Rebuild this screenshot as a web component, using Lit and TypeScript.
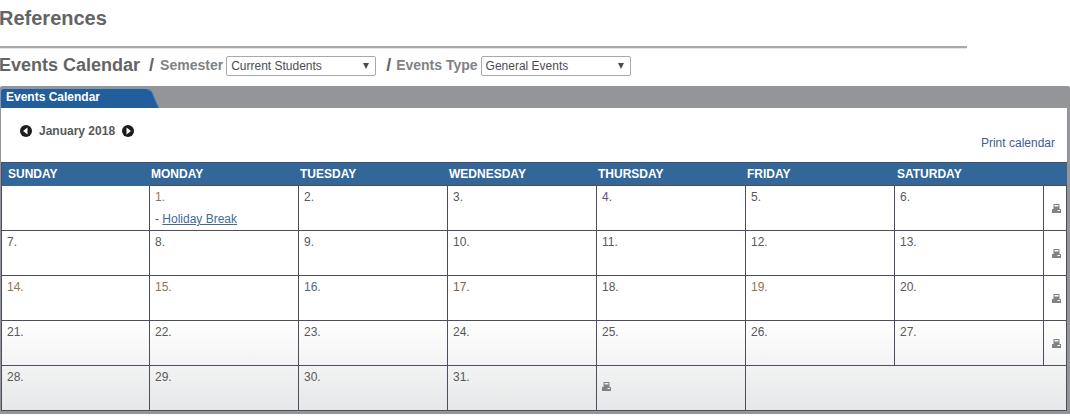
import { LitElement, html, css, svg } from "lit";
import { customElement } from "lit/decorators.js";

const printer = svg`<svg class="printer" width="9" height="9" viewBox="0 0 9 9"><path fill="#808285" fill-rule="evenodd" d="M1.500 0h6v5h-6z M2.500 1v1.500h4V1z"/><path fill="#808285" d="M0 5h9v4H0z"/><path fill="#fff" d="M5.500 6h2.500v1H5.500z"/></svg>`;

const colors: Record<number, string> = { 1: "#8f7650", 4: "#6a4f80", 14: "#8f7650", 15: "#8f7650", 16: "#4a6a8e", 17: "#7d5f4a", 19: "#8f7650" };

@customElement("app-root")
export class AppRoot extends LitElement {
  static styles = css`
    :host { display: block; font-family: "Liberation Sans", Arial, sans-serif; width: 1070px; height: 420px; overflow: hidden; background: #fff; }
    .title { font-size: 20px; font-weight: bold; color: #636466; line-height: 21px; padding-top: 8px; height: 46px; box-sizing: border-box; margin: 0 0 0 -1px; }
    .rule { width: 967px; height: 2px; background: #a7a8aa; border-bottom: 1px solid #e6e6e6; margin-bottom: 4px; }
    .filters { display: flex; align-items: center; height: 24px; color: #808285; font-weight: bold; font-size: 14px; margin-bottom: 9px; }
    .filters h2 { margin: 0 0 0 -1px; font-size: 18px; color: #636466; font-weight: bold; }
    .slash { font-size: 18px; color: #636466; margin: 0 5px 0 10px; }
    .slash.near { margin: 0 6px 0 9px; }
    .sel { position: relative; display: inline-block; margin: 2px 0 0 3px; height: 20px; }
    select { appearance: none; width: 150px; height: 20px; box-sizing: border-box; border: 1px solid #a9a9a9; border-radius: 2px; background: #fff; font: 12px "Liberation Sans", Arial, sans-serif; color: #4d4d4f; padding: 0 0 0 4px; display: block; }
    .arrow { position: absolute; right: 7px; top: 7px; width: 0; height: 0; border-left: 3px solid transparent; border-right: 3px solid transparent; border-top: 6px solid #4d4d4f; pointer-events: none; }
    .panel { background: #949598; padding: 22px 3px 3px 1px; position: relative; border-radius: 2px 2px 0 0; }
    .tab { position: absolute; left: 1px; top: 3px; width: 158px; height: 19px; }
    .tab svg { position: absolute; left: 0; top: 0; }
    .tab span { position: relative; font-size: 12px; font-weight: bold; color: #fff; padding: 1px 0 0 5px; line-height: 14px; display: block; }
    .body { background: linear-gradient(#fff 0, #fff 70%, #e6e7e8 100%); }
    .top { height: 54px; display: flex; justify-content: space-between; box-sizing: border-box; padding: 16px 12px 0 19px; }
    .month { display: flex; align-items: center; height: 14px; font-size: 12px; font-weight: bold; color: #58595b; gap: 7px; }
    .print-link { font-size: 12px; color: #3f5d94; margin-top: 12px; line-height: 14px; }
    .grid { display: grid; grid-template-columns: 148px repeat(6, 149px) 23px; grid-template-rows: 23px repeat(5, 45px); border-top: 1px solid #4d4d5f; border-left: 1px solid #4d4d5f; }
    .hd { background: #336699; color: #fff; font-size: 12px; font-weight: bold; line-height: 22px; padding-left: 1px; box-sizing: border-box; border-bottom: 1px solid #4d4d5f; }
    .hd.first { padding-left: 6px; border-bottom-color: #336699; }
    .hd.last { padding-left: 2px; }
    .cell { border-right: 1px solid #4d4d5f; border-bottom: 1px solid #4d4d5f; padding: 4px 0 0 5px; box-sizing: border-box; font-size: 12px; color: #58595b; line-height: 14px; }
    .ev { margin-top: 8px; }
    .ev a { color: #3f6a9a; text-decoration: underline; }
    .pc { display: flex; align-items: center; padding: 0 0 0 8px; }
    .pl { padding: 16px 0 0 5px; }
    .wide3 { grid-column: span 3; }
    .printer { display: block; }
  `;

  render() {
    const days = ["SUNDAY", "MONDAY", "TUESDAY", "WEDNESDAY", "THURSDAY", "FRIDAY", "SATURDAY", ""];
    const weeks: number[][] = [
      [0, 1, 2, 3, 4, 5, 6],
      [7, 8, 9, 10, 11, 12, 13],
      [14, 15, 16, 17, 18, 19, 20],
      [21, 22, 23, 24, 25, 26, 27],
    ];
    const num = (n: number) => html`<span style="color:${colors[n] ?? "#58595b"}">${n}.</span>`;
    return html`
      <h1 class="title">References</h1>
      <div class="rule"></div>
      <div class="filters">
        <h2>Events Calendar</h2>
        <span class="slash near">/</span>Semester
        <span class="sel"><select><option>Current Students</option></select><i class="arrow"></i></span>
        <span class="slash">/</span>Events Type
        <span class="sel"><select><option>General Events</option></select><i class="arrow"></i></span>
      </div>
      <div class="panel">
        <div class="tab">
          <svg width="158" height="19" viewBox="0 0 158 19"><path d="M0 19V3q0-3 3-3h143q3 0 5 3l7 16z" fill="#225e9b"/><path d="M146 .5q3 0 5 3l6.500 15.500" fill="none" stroke="#3f83c9"/></svg>
          <span>Events Calendar</span>
        </div>
        <div class="body">
          <div class="top">
            <div class="month">
              <svg width="12" height="12" viewBox="0 0 12 12"><circle cx="6" cy="6" r="6" fill="#1c1c1c"/><path d="M7.500 2.500v7L3 6z" fill="#fff"/></svg>
              January 2018
              <svg width="12" height="12" viewBox="0 0 12 12"><circle cx="6" cy="6" r="6" fill="#1c1c1c"/><path d="M4.500 2.500v7L9 6z" fill="#fff"/></svg>
            </div>
            <div class="print-link">Print calendar</div>
          </div>
          <div class="grid">
            ${days.map((d, i) => html`<div class="hd ${i === 0 ? "first" : i === 6 ? "last" : ""}">${d}</div>`)}
            ${weeks.map((w) => html`
              ${w.map((n) => html`<div class="cell">${n ? num(n) : ""}${n === 1 ? html`<div class="ev">- <a href="#">Holiday Break</a></div>` : ""}</div>`)}
              <div class="cell pc">${printer}</div>
            `)}
            ${[28, 29, 30, 31].map((n) => html`<div class="cell">${num(n)}</div>`)}
            <div class="cell pl">${printer}</div>
            <div class="cell wide3"></div>
          </div>
        </div>
      </div>
    `;
  }
}
